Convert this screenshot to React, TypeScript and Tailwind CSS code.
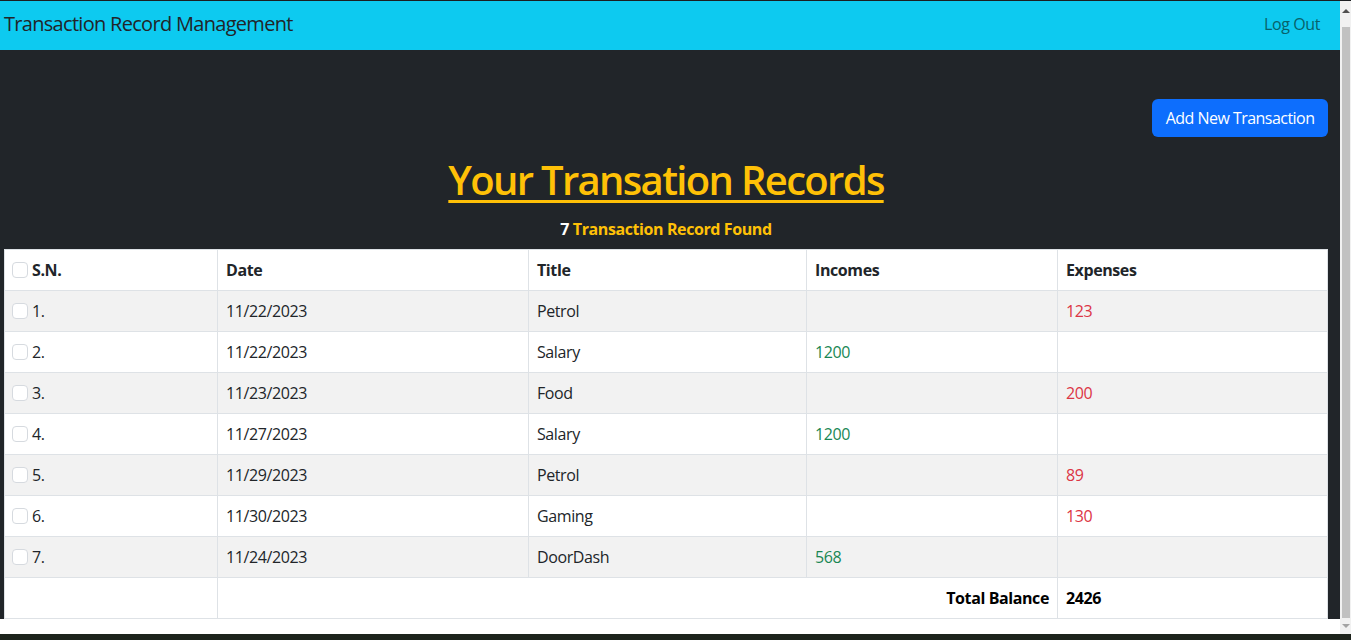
import { useState } from 'react';

// transaction list shown on the dashboard
const records = [
  { date: '11/22/2023', title: 'Petrol', income: '', expense: '123' },
  { date: '11/22/2023', title: 'Salary', income: '1200', expense: '' },
  { date: '11/23/2023', title: 'Food', income: '', expense: '200' },
  { date: '11/27/2023', title: 'Salary', income: '1200', expense: '' },
  { date: '11/29/2023', title: 'Petrol', income: '', expense: '89' },
  { date: '11/30/2023', title: 'Gaming', income: '', expense: '130' },
  { date: '11/24/2023', title: 'DoorDash', income: '568', expense: '' },
];

function Check({ checked, onChange }: { checked: boolean; onChange: () => void }) {
  return (
    <input
      type="checkbox"
      checked={checked}
      onChange={onChange}
      className="h-4 w-4 shrink-0 appearance-none rounded-[4px] border border-[#d6dadf] bg-white checked:bg-[#0d6efd]"
    />
  );
}

export default function App() {
  const [sel, setSel] = useState<boolean[]>(records.map(() => false));
  const all = sel.every(Boolean);

  return (
    <div className="flex h-[640px] flex-col overflow-hidden bg-white font-['Open_Sans',sans-serif] tracking-[-0.025em] text-[#212529]">
      <div className="flex h-[634px] border-t border-[#1b1e21]">
        <div className="flex min-w-0 flex-1 flex-col">
          {/* navbar */}
          <nav className="flex h-[49px] shrink-0 items-center justify-between bg-[#0dcaf0] pb-[4px] pl-[4px] pr-[20px]">
            <span className="text-[20px] leading-[30px] tracking-[-0.035em]">Transaction Record Management</span>
            <a className="text-[16px] text-[#08626a]">Log Out</a>
          </nav>

          <main className="flex flex-col bg-[#212529] pl-[4px] pr-[12px] pt-[49px]">
            <div className="flex justify-end">
              <button className="h-[38px] rounded-[6px] bg-[#0d6efd] px-[13.5px] text-[16px] tracking-[-0.033em] text-white">
                Add New Transaction
              </button>
            </div>

            <h1 className="mt-[19px] text-center text-[40px] font-semibold leading-[48px] tracking-[-0.042em] text-[#ffc107] underline decoration-[3px] underline-offset-[5px]">
              Your Transation Records
            </h1>
            <p className="mt-[13px] text-center text-[16px] font-bold leading-[24px] text-[#ffc107]">
              <span className="text-white">{records.length}</span> Transaction Record Found
            </p>

            <table className="mt-[8px] w-full table-fixed border-collapse bg-white text-[16px] leading-[24px]">
              <colgroup>
                <col className="w-[213px]" />
                <col className="w-[311px]" />
                <col className="w-[278px]" />
                <col className="w-[251px]" />
                <col />
              </colgroup>
              <thead>
                <tr className="h-[41px] font-bold">
                  <th className="border border-[#dee2e6] pl-[7px] pr-[8px] text-left">
                    <div className="flex items-center gap-[4px]">
                      <Check checked={all} onChange={() => setSel(records.map(() => !all))} />
                      S.N.
                    </div>
                  </th>
                  <th className="border border-[#dee2e6] px-[8px] text-left">Date</th>
                  <th className="border border-[#dee2e6] px-[8px] text-left">Title</th>
                  <th className="border border-[#dee2e6] px-[8px] text-left">Incomes</th>
                  <th className="border border-[#dee2e6] px-[8px] text-left">Expenses</th>
                </tr>
              </thead>
              <tbody>
                {records.map((r, i) => (
                  <tr key={i} className={`h-[41px] ${i % 2 === 0 ? 'bg-[#f2f2f2]' : 'bg-white'}`}>
                    <td className="border border-[#dee2e6] pl-[7px] pr-[8px]">
                      <div className="flex items-center gap-[4px]">
                        <Check
                          checked={sel[i]}
                          onChange={() => setSel(sel.map((v, j) => (j === i ? !v : v)))}
                        />
                        {i + 1}.
                      </div>
                    </td>
                    <td className="border border-[#dee2e6] px-[8px]">{r.date}</td>
                    <td className="border border-[#dee2e6] px-[8px]">{r.title}</td>
                    <td className="border border-[#dee2e6] px-[8px] text-[#198754]">{r.income}</td>
                    <td className="border border-[#dee2e6] px-[8px] text-[#dc3545]">{r.expense}</td>
                  </tr>
                ))}
                <tr className="h-[41px] font-bold text-black">
                  <td className="border border-[#dee2e6] px-[8px]"></td>
                  <td colSpan={3} className="border border-[#dee2e6] px-[8px] text-right">
                    Total Balance
                  </td>
                  <td className="border border-[#dee2e6] px-[8px]">2426</td>
                </tr>
              </tbody>
            </table>
          </main>

          <div className="flex-1 bg-white" />
        </div>

        {/* fake window scrollbar */}
        <div className="flex w-[11px] shrink-0 flex-col items-center bg-[#f1f1f1]">
          <div className="mt-[8px] h-0 w-0 border-x-[4px] border-b-[4px] border-x-transparent border-b-[#505050]" />
          <div className="mt-[14px] w-[8px] flex-1 bg-[#c1c1c1]" />
          <div className="mb-[6px] mt-[6px] h-0 w-0 border-x-[4px] border-t-[4px] border-x-transparent border-t-[#a3a3a3]" />
        </div>
      </div>
      <div className="flex-1 bg-[#1d231c]" />
    </div>
  );
}
